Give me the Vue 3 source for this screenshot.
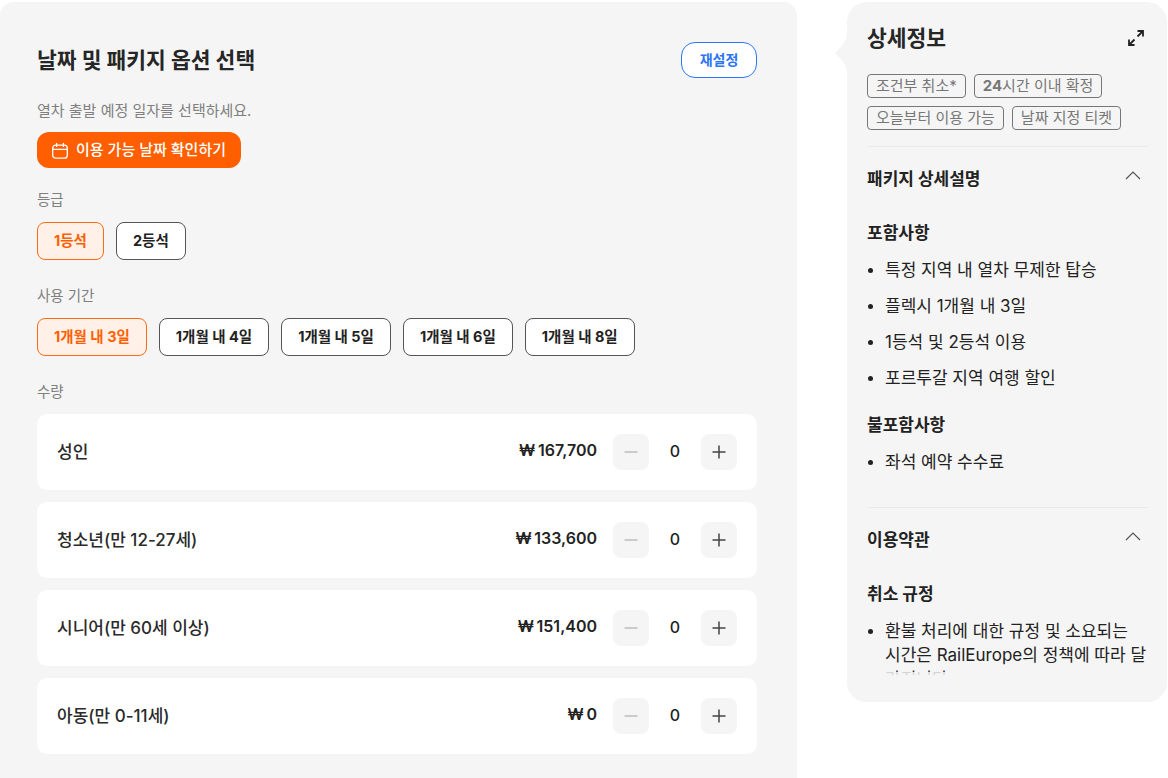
<template>
  <div class="page">
    <section class="options">
      <div class="options-head">
        <h2>날짜 및 패키지 옵션 선택</h2>
        <button class="reset">재설정</button>
      </div>

      <p class="hint">열차 출발 예정 일자를 선택하세요.</p>
      <button class="date-btn">
        <svg width="18" height="18" viewBox="0 0 18 18" fill="none" stroke="#fff" stroke-width="1.3" stroke-linecap="round">
          <rect x="1.7" y="3.2" width="14.6" height="13" rx="3" />
          <path d="M1.7 7.400h14.600M5.600 1.400v3M12.400 1.400v3" />
        </svg>
        이용 가능 날짜 확인하기
      </button>

      <p class="label">등급</p>
      <div class="chips">
        <button v-for="(c, i) in grades" :key="c" class="chip" :class="{ active: i === 0 }">{{ c }}</button>
      </div>

      <p class="label">사용 기간</p>
      <div class="chips">
        <button v-for="(c, i) in periods" :key="c" class="chip" :class="{ active: i === 0 }">{{ c }}</button>
      </div>

      <p class="label">수량</p>
      <div class="rows">
        <div v-for="r in rows" :key="r.name" class="row">
          <span class="row-name">{{ r.name }}</span>
          <span class="price">₩&#8201;{{ r.price }}</span>
          <div class="stepper">
            <button class="step minus">
              <svg width="14" height="14" viewBox="0 0 14 14"><path d="M0.500 7h13" stroke="#bdbdbd" stroke-width="1.5" /></svg>
            </button>
            <span class="count">0</span>
            <button class="step">
              <svg width="14" height="14" viewBox="0 0 14 14"><path d="M0.500 7h13M7 0.500v13" stroke="#444" stroke-width="1.5" /></svg>
            </button>
          </div>
        </div>
      </div>
    </section>

    <aside class="detail">
      <svg class="notch" width="13" height="42" viewBox="0 0 13 42">
        <path d="M13 0C13 9 9 13 5 16.500L1 21l4 4.500C9 29 13 33 13 42z" fill="#f5f5f5" />
      </svg>
      <div class="detail-head">
        <h3>상세정보</h3>
        <svg class="expand" width="18" height="18" viewBox="0 0 18 18" fill="none" stroke="#222" stroke-width="1.8">
          <path d="M10.500 2h5.500v5.500M16 2l-5.500 5.500M7.500 16H2v-5.500M2 16l5.500-5.500" />
        </svg>
      </div>
      <div class="tags">
        <span class="tag">조건부 취소*</span>
        <span class="tag"><b>24</b>시간 이내 확정</span>
        <span class="tag">오늘부터 이용 가능</span>
        <span class="tag">날짜 지정 티켓</span>
      </div>

      <div class="scroll">
        <div class="sec first">
          <div class="sec-head">
            <h4>패키지 상세설명</h4>
            <svg width="16" height="9" viewBox="0 0 16 9" fill="none" stroke="#555" stroke-width="1.2"><path d="M1 8l7-7 7 7" /></svg>
          </div>
          <h5>포함사항</h5>
          <ul>
            <li v-for="t in included" :key="t">{{ t }}</li>
          </ul>
          <h5 class="next">불포함사항</h5>
          <ul>
            <li>좌석 예약 수수료</li>
          </ul>
        </div>
        <div class="sec">
          <div class="sec-head">
            <h4>이용약관</h4>
            <svg width="16" height="9" viewBox="0 0 16 9" fill="none" stroke="#555" stroke-width="1.2"><path d="M1 8l7-7 7 7" /></svg>
          </div>
          <h5>취소 규정</h5>
          <ul>
            <li>환불 처리에 대한 규정 및 소요되는 시간은 RailEurope의 정책에 따라 달라집니다.</li>
          </ul>
        </div>
      </div>
      <div class="fade"></div>
    </aside>
  </div>
</template>

<script setup>
const grades = ['1등석', '2등석']
const periods = ['1개월 내 3일', '1개월 내 4일', '1개월 내 5일', '1개월 내 6일', '1개월 내 8일']
const rows = [
  { name: '성인', price: '167,700' },
  { name: '청소년(만 12-27세)', price: '133,600' },
  { name: '시니어(만 60세 이상)', price: '151,400' },
  { name: '아동(만 0-11세)', price: '0' },
]
const included = ['특정 지역 내 열차 무제한 탑승', '플렉시 1개월 내 3일', '1등석 및 2등석 이용', '포르투갈 지역 여행 할인']
</script>

<style>
html,
body {
  background: #fff;
  overflow: hidden;
}
</style>

<style scoped>
.page {
  display: flex;
  align-items: flex-start;
  gap: 50px;
  width: 1168px;
  height: 778px;
  padding-top: 2px;
  box-sizing: border-box;
  overflow: hidden;
  font-family: Inter, "Noto Sans CJK KR", sans-serif;
  color: #222;
}

button {
  font-family: inherit;
  cursor: pointer;
}

.options {
  width: 797px;
  flex: none;
  box-sizing: border-box;
  min-height: 800px;
  padding: 40px 40px 0 37px;
  background: #f5f5f5;
  border-radius: 14px 14px 0 0;
}

.options-head {
  display: flex;
  justify-content: space-between;
  align-items: center;
  height: 36px;
}

h2 {
  margin: 0 0 4px;
  font-size: 21.5px;
  font-weight: 700;
  color: #262626;
}

.reset {
  width: 76px;
  height: 36px;
  padding: 0 0 3px;
  border: 1px solid #2b75f6;
  border-radius: 14px;
  background: #fff;
  color: #2b75f6;
  font-size: 14px;
  font-weight: 700;
}

.hint {
  margin: 22px 0 0;
  height: 22px;
  line-height: 21px;
  font-size: 15px;
  color: #808080;
}

.date-btn {
  display: flex;
  align-items: center;
  gap: 7px;
  width: 204px;
  height: 36px;
  margin-top: 10px;
  padding: 0 0 0 14px;
  border: 0;
  border-radius: 12px;
  background: #ff5f00;
  color: #fff;
  font-size: 15px;
  font-weight: 500;
  line-height: 32px;
}

.date-btn svg {
  margin-top: 1px;
}

.label {
  margin: 22px 0 10px;
  height: 22px;
  line-height: 20px;
  font-size: 14.5px;
  color: #808080;
}

.chips {
  display: flex;
  gap: 12px;
}

.chip {
  height: 38px;
  padding: 0 16px 3px;
  border: 1px solid #555;
  border-radius: 8px;
  background: #fff;
  color: #222;
  font-size: 14.5px;
  font-weight: 700;
}

.chip.active {
  border-color: #ff6a14;
  background: #fff0e8;
  color: #ff5f00;
}

.chips + .label {
  margin-top: 26px;
}

.rows {
  display: flex;
  flex-direction: column;
  gap: 12px;
}

.row {
  display: flex;
  align-items: center;
  height: 76px;
  padding: 0 20px;
  background: #fff;
  border-radius: 10px;
}

.row-name {
  flex: 1;
  margin-top: -4px;
  font-size: 17px;
  font-weight: 500;
  color: #2a2a2a;
}

.price {
  margin-top: -4px;
  font-size: 16px;
  font-weight: 600;
  color: #222;
}

.stepper {
  display: flex;
  align-items: center;
  margin-left: 16px;
}

.step {
  display: flex;
  align-items: center;
  justify-content: center;
  width: 36px;
  height: 36px;
  padding: 0;
  border: 0;
  border-radius: 8px;
  background: #f5f5f5;
}

.count {
  width: 52px;
  margin-top: -2px;
  text-align: center;
  font-size: 16px;
  font-weight: 500;
}

.detail {
  position: relative;
  width: 320px;
  height: 700px;
  flex: none;
  box-sizing: border-box;
  padding: 0 20px;
  background: #f5f5f5;
  border-radius: 20px;
}

.notch {
  position: absolute;
  left: -13px;
  top: 30px;
}

.detail-head {
  display: flex;
  justify-content: space-between;
  align-items: center;
  height: 70px;
  padding-bottom: 2px;
  box-sizing: border-box;
}

.expand {
  margin: 3px 2px 0 0;
}

h3 {
  margin: 0;
  font-size: 21.500px;
  font-weight: 700;
  color: #262626;
}

.tags {
  display: flex;
  flex-wrap: wrap;
  gap: 8px;
  margin-top: 2px;
  padding-bottom: 16px;
  border-bottom: 1px solid #eaeaea;
}

.tag {
  height: 24px;
  line-height: 21px;
  box-sizing: border-box;
  padding: 0 8px;
  border: 1px solid #777;
  border-radius: 4px;
  font-size: 15px;
  color: #777;
}

.tag b {
  font-weight: 700;
}

.scroll {
  height: 528px;
  overflow: hidden;
}

.sec-head {
  display: flex;
  justify-content: space-between;
  align-items: center;
  height: 60px;
  padding-right: 6px;
}

.sec-head svg {
  margin-top: -4px;
}

h4 {
  margin: 0;
  font-size: 17px;
  font-weight: 700;
  color: #222;
}

h5 {
  margin: 15px 0 0;
  height: 22px;
  line-height: 22px;
  font-size: 17px;
  font-weight: 700;
  color: #222;
}

h5.next {
  margin-top: 24px;
}

ul {
  list-style: none;
  margin: 14px 0 0;
  padding: 0;
}

li {
  position: relative;
  padding-left: 18px;
  margin-bottom: 12px;
  line-height: 24px;
  font-size: 17px;
  color: #222;
}

li::before {
  content: "";
  position: absolute;
  left: 1px;
  top: 10px;
  width: 5px;
  height: 5px;
  border-radius: 50%;
  background: #222;
}

.sec.first {
  padding-bottom: 21px;
  border-bottom: 1px solid #eaeaea;
}

.fade {
  position: absolute;
  left: 0;
  right: 0;
  top: 670px;
  bottom: 0;
  border-radius: 0 0 20px 20px;
  background: rgba(245, 245, 245, 0.85);
}
</style>
